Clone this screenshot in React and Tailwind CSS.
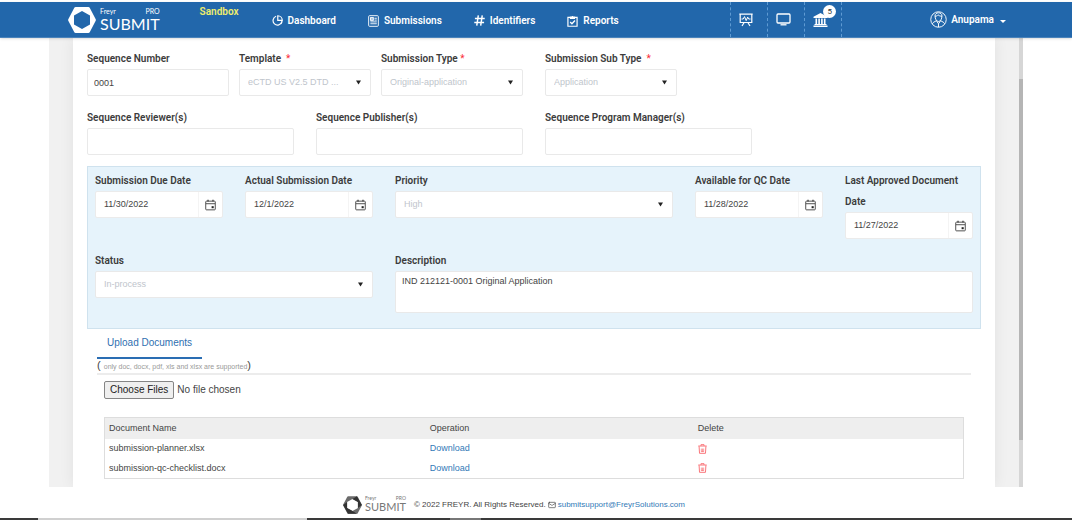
import React from 'react';
import { Mail } from 'lucide-react';

const documents = ['submission-planner.xlsx', 'submission-qc-checklist.docx'];

const Logo = ({ dark }) => (
  <a href="#home" className={dark ? 'flex items-center gap-[3px] text-[#777] font-normal' : 'flex items-center gap-1 text-white font-normal'} aria-label="Freyr Submit Pro">
    <svg viewBox="0 0 28 26" className={dark ? 'w-[19px] h-[18px]' : 'w-7 h-[26px]'}>
      <path
        fill={dark ? '#6b6b6b' : 'currentColor'}
        fillRule="evenodd"
        d="M7.6 0h12.8c.6 0 1 .3 1.300.8L27.700 12.200c.3.5.3 1.100 0 1.600L21.700 25.200c-.3.5-.7.8-1.300.8H7.600c-.6 0-1-.3-1.300-.8L.3 13.800c-.3-.5-.3-1.100 0-1.600L6.300.8C6.600.3 7 0 7.600 0ZM14 4 6 8.500v9L14 22l8-4.500v-9Z"
      />
      {dark && <path fill="#333" d="M6 8.500v9L14 22 20.500 26H7.500L.2 13ZM20.500 0l7.300 13-5.800 4.500v-9L14 4Z" />}
    </svg>
    <span className="flex flex-col font-[Lato,sans-serif]">
      <span className={dark ? 'flex justify-between text-[5px] leading-[5px]' : 'flex justify-between text-[7px] leading-[9px]'}>
        <span>Freyr</span>
        <span>PRO</span>
      </span>
      <span className={dark ? 'text-[11px] leading-[12px]' : 'text-[16px] leading-[16px]'}>SUBMIT</span>
    </span>
  </a>
);

const DashboardIcon = () => (
  <svg viewBox="0 0 12 12" className="w-[11px] h-[11px]" fill="none" stroke="currentColor" strokeWidth="1.3">
    <path d="M4.500 1.400A4.900 4.900 0 1 0 10.800 7.300" />
    <path d="M6.300.8a5 5 0 0 1 4.900 5H6.300Z" />
    <path d="M10.900 6.500a5 5 0 0 1-1.300 3.200" />
  </svg>
);

const SubmissionsIcon = () => (
  <svg viewBox="0 0 12 13" className="w-[11px] h-3" fill="none" stroke="currentColor">
    <rect x=".7" y=".7" width="10.600" height="11.600" rx="1" />
    <rect x="2.800" y="2.800" width="3" height="3" fill="currentColor" fillOpacity=".6" />
    <path d="M7 3.500h2.600M7 5.500h2.600M2.600 7.500h7M2.600 9.500h7" />
  </svg>
);

const HashIcon = () => (
  <svg viewBox="0 0 12 12" className="w-[11px] h-[11px]" fill="none" stroke="currentColor" strokeWidth="1.600">
    <path d="M4.700.5 3 11.500M9 .5 7.300 11.500M1 3.800h10.700M.3 8.200H11" />
  </svg>
);

const ReportsIcon = () => (
  <svg viewBox="0 0 12 13" className="w-[11px] h-3" fill="none" stroke="currentColor" strokeWidth="1.300">
    <path d="M3.500 2.500H1v9.700h10V2.500H8.500" />
    <path d="M3.800 3.800V2.200h1.400a.9.900 0 0 1 1.600 0h1.400v1.600Z" fill="currentColor" />
    <path d="m3.500 7.500 1.900 1.900 3.300-3.500" strokeWidth="1.500" />
  </svg>
);

const BoardIcon = () => (
  <svg viewBox="0 0 14 14" className="w-3.5 h-3.5" fill="none" stroke="currentColor">
    <path d="M.3 1.200h13.400M1.200 1.500v8h11.600v-8M5 9.700 3 13M9 9.700l2 3.300" strokeWidth="1.200" />
    <path d="M2.500 6h1.700l1.300-2.400 1.700 4 1.500-3.500 1 1.900h1.800" />
  </svg>
);

const MonitorIcon = () => (
  <svg viewBox="0 0 15 13" className="w-[15px] h-[13px]" fill="none" stroke="currentColor" strokeWidth="1.300">
    <rect x="1" y="1" width="13" height="9" rx="1" />
    <path d="M4.500 11.800h6" />
  </svg>
);

const BankIcon = () => (
  <svg viewBox="0 0 15 14" className="w-[15px] h-3.5" fill="currentColor">
    <path d="M7.500 0 14.500 3.700V5H.5V3.700ZM2.500 5.500h1.600V11H2.500ZM5.300 5.500h1.600V11H5.300ZM8.100 5.500h1.600V11H8.100ZM10.900 5.500h1.600V11h-1.600ZM1.500 11h12v1H1.500ZM.5 12.500h14V14H.5Z" />
  </svg>
);

const AvatarIcon = () => (
  <svg viewBox="0 0 18 18" className="w-[17px] h-[17px]" fill="none" stroke="currentColor">
    <circle cx="9" cy="9" r="8.200" />
    <path d="M5.300 5.200c0-2 1.600-3.300 3.700-3.300s3.700 1.300 3.700 3.300c0 3-1.700 6-3.700 6s-3.700-3-3.700-6ZM5.300 5.500c1.500.2 2.500-.5 3.200-1.500 1 1.200 2.500 1.500 4.200 1.500" />
    <path d="M2.500 13.500c.6-1.600 2.300-2 4.200-3.200L9 13.500l2.300-3.200c1.900 1.200 3.600 1.600 4.200 3.200M9 13.500V17" />
  </svg>
);

const CalendarIcon = () => (
  <svg viewBox="0 0 12 12" className="w-[11px] h-3" fill="none" stroke="#444">
    <rect x=".8" y="1.800" width="10.400" height="9.500" rx=".8" />
    <path d="M1 4.600h10" />
    <path d="M3.300.3v2M8.700.3v2" strokeWidth="1.500" />
    <path d="M7.200 7.300h2.300v2.200H7.200Z" fill="#222" stroke="none" />
  </svg>
);

const TrashIcon = () => (
  <svg viewBox="0 0 10 11" className="w-[9px] h-2.5" fill="none" stroke="#f8686d">
    <path d="M.3 2.200h9.400M3.300 2V.7h3.400V2M1.200 2.500l.5 7.800h6.600l.5-7.800" />
    <path d="M3.700 5v3.500M6.300 5v3.500M5 5v3.500M3.500 8.300h3" strokeWidth=".7" />
  </svg>
);

const navItems = [
  { name: 'Dashboard', icon: DashboardIcon },
  { name: 'Submissions', icon: SubmissionsIcon },
  { name: 'Identifiers', icon: HashIcon },
  { name: 'Reports', icon: ReportsIcon },
];

const Field = ({ id, label, required, className = '', children }) => (
  <div className={`flex flex-col ${className}`}>
    <label htmlFor={id} className="font-[Roboto,sans-serif] text-[10px] font-semibold leading-[21px] text-[#3c3c3c] whitespace-pre-wrap">
      {label}
      {required && <span className="font-normal text-red-500"> *</span>}
    </label>
    {children}
  </div>
);

const TextField = ({ id, value = '', ...rest }) => (
  <Field id={id} {...rest}>
    <input id={id} type="text" defaultValue={value} className="w-full h-[27px] px-1.5 bg-white border border-[#e9e9e9] rounded-xs text-[#444]" />
  </Field>
);

const SelectField = ({ id, value, ...rest }) => (
  <Field id={id} {...rest}>
    <div className="relative">
      <select id={id} disabled className="block w-full h-[27px] pl-2 pr-6 appearance-none truncate bg-white border border-[#e9e9e9] rounded-xs text-[#c0c5cc] opacity-100">
        <option>{value}</option>
      </select>
      <svg viewBox="0 0 6 5" className="absolute right-2.5 top-[11px] w-[5px] h-[5px] pointer-events-none">
        <path d="M0 0h6L3 5Z" fill="#222" />
      </svg>
    </div>
  </Field>
);

const DateField = ({ id, value, ...rest }) => (
  <Field id={id} {...rest}>
    <div className="flex h-[27px] bg-white border border-[#ebebeb] rounded-xs">
      <input id={id} type="text" defaultValue={value} className="flex-1 min-w-0 px-2 text-[#444]" />
      <button type="button" aria-label="Open calendar" className="w-6 flex items-center justify-center border-l border-[#f4f4f4]">
        <CalendarIcon />
      </button>
    </div>
  </Field>
);

const Header = () => (
  <header className="relative z-10 mt-0.5 flex h-9 items-center pl-[68px] pr-[66px] bg-[#2267ab] border-b border-[#4a83bb] text-white font-[Roboto,sans-serif] text-[10px] font-semibold shadow-sm">
    <Logo />
    <span className="self-start ml-10 leading-5 text-[#f0ee6c]">Sandbox</span>
    <nav className="flex items-center gap-8 ml-[33px]">
      {navItems.map(({ name, icon: Icon }) => (
        <a key={name} href={`#${name.toLowerCase()}`} className="flex items-center gap-[5px] leading-4 pt-0.5">
          <Icon />
          <span>{name}</span>
        </a>
      ))}
    </nav>
    <div className="flex self-stretch ml-auto border-r border-dashed border-[#5f9bd3]">
      <button type="button" aria-label="Reports board" className="w-[37px] pr-1.5 flex items-center justify-center border-l border-dashed border-[#5f9bd3]">
        <BoardIcon />
      </button>
      <button type="button" aria-label="Display" className="w-[37px] pr-1.5 flex items-center justify-center border-l border-dashed border-[#5f9bd3]">
        <MonitorIcon />
      </button>
      <button type="button" aria-label="Notifications" className="relative w-[37px] pr-1.5 flex items-center justify-center border-l border-dashed border-[#5f9bd3]">
        <BankIcon />
        <span className="absolute right-[5px] top-[3px] w-[13px] h-[13px] rounded-full bg-white text-[#333] text-[8px] leading-[13px] font-normal">5</span>
      </button>
    </div>
    <button type="button" className="flex items-center gap-1 ml-[88px]">
      <AvatarIcon />
      <span>Anupama</span>
      <svg viewBox="0 0 6 3" className="w-1.5 h-[3px] ml-0.5 mt-1" fill="currentColor">
        <path d="M0 0h6L3 3Z" />
      </svg>
    </button>
  </header>
);

const App = () => {
  return (
    <div className="min-h-screen flex flex-col bg-white font-['Liberation_Sans',sans-serif] text-[9px] text-[#444]">
      <Header />

      <main className="flex flex-1 mx-[49px] overflow-hidden bg-[#f1f1f1]">
        <div className="flex-1 mx-6 px-3.5 pt-2.5 pb-2 bg-white shadow-[0_0_14px_rgba(0,0,0,0.07)]">
          {/* Sequence details */}
          <div className="grid grid-cols-4 gap-x-[22px] gap-y-[11px]">
            <div className="col-span-2 grid grid-cols-[142fr_132fr_142fr] gap-2.5">
              <TextField id="seq" label="Sequence Number" value="0001" />
              <SelectField id="template" label="Template " required value="eCTD US V2.5 DTD ..." />
              <SelectField id="type" label="Submission Type" required value="Original-application" />
            </div>
            <SelectField id="subtype" label="Submission Sub Type " required value="Application" className="w-[132px] col-span-2" />
            <TextField id="reviewers" label="Sequence Reviewer(s)" />
            <TextField id="publishers" label="Sequence Publisher(s)" />
            <TextField id="managers" label="Sequence Program Manager(s)" />
          </div>

          {/* Dates and status */}
          <section className="grid grid-cols-6 gap-x-[22px] gap-y-[11px] mt-[11px] pt-[3px] px-[7px] pb-[15px] bg-[#e6f3fb] border border-[#cfe2ee]">
            <DateField id="due" label="Submission Due Date" value="11/30/2022" />
            <DateField id="actual" label="Actual Submission Date" value="12/1/2022" />
            <SelectField id="priority" label="Priority" value="High" className="col-span-2" />
            <DateField id="qc" label="Available for QC Date" value="11/28/2022" />
            <DateField id="approved" label="Last Approved Document Date" value="11/27/2022" />
            <SelectField id="status" label="Status" value="In-process" className="col-span-2" />
            <Field id="description" label="Description" className="col-span-4">
              <textarea id="description" defaultValue="IND 212121-0001 Original Application" className="w-full h-[42px] px-1.5 py-px resize-none bg-white border border-[#e9e9e9] rounded-xs leading-4" />
            </Field>
          </section>

          {/* Upload */}
          <section className="pl-2.5">
            <div className="mr-2.5 border-b-2 border-[#ececec]">
              <button type="button" className="block h-[30px] px-2.5 pb-0.5 text-[10px] text-[#2f6fb0] border-b-2 border-[#2a6db3]">
                Upload Documents
              </button>
              <p className="text-[11px] leading-[13px]">
                ( <span className="text-[7px] text-[#999]">only doc, docx, pdf, xls and xlsx are supported</span>)
              </p>
            </div>
            <div className="pl-[7px] pr-[17px]">
              <input
                type="file"
                multiple
                aria-label="Upload documents"
                className="block mt-1.5 text-[10px] leading-4 file:h-[18px] file:mr-[3px] file:px-[5px] file:leading-4 file:bg-[#efefef] file:text-[#222] file:border file:border-solid file:border-[#858585] file:rounded-xs"
              />
              <table className="w-full mt-[18px] table-fixed text-left border border-[#ddd]">
                <thead className="bg-[#eee]">
                  <tr className="h-[21px]">
                    <th className="w-[37.4%] pl-1 font-normal">Document Name</th>
                    <th className="w-[31.2%] pl-1 font-normal">Operation</th>
                    <th className="pl-1 font-normal">Delete</th>
                  </tr>
                </thead>
                <tbody>
                  {documents.map((name) => (
                    <tr key={name} className="h-5">
                      <td className="pl-1">{name}</td>
                      <td className="pl-1">
                        <a href={`#${name}`} className="text-[#337ab7]">Download</a>
                      </td>
                      <td className="pl-1">
                        <button type="button" aria-label={`Delete ${name}`} className="block">
                          <TrashIcon />
                        </button>
                      </td>
                    </tr>
                  ))}
                </tbody>
              </table>
            </div>
          </section>
        </div>

        {/* Scroll track */}
        <div className="flex flex-col w-1 bg-[#d6d6d6]">
          <div className="grow-41" />
          <div className="grow-361 bg-[#b5b5b5]" />
          <div className="grow-47" />
        </div>
      </main>

      <footer className="flex items-center justify-center h-[31px] pt-1 pr-11 text-[8px]">
        <Logo dark />
        <span className="ml-2">© 2022 FREYR. All Rights Reserved.</span>
        <Mail className="w-2 h-2 mx-0.5" />
        <a href="mailto:submitsupport@FreyrSolutions.com" className="text-[#337ab7]">submitsupport@FreyrSolutions.com</a>
      </footer>
      <div className="flex h-0.5 bg-[#3a3a3a]">
        <div className="w-[269px] ml-[38px] bg-[#d0d0d0]" />
        <div className="w-[31px] ml-[143px] bg-[#777]" />
      </div>
    </div>
  );
};

export default App;
